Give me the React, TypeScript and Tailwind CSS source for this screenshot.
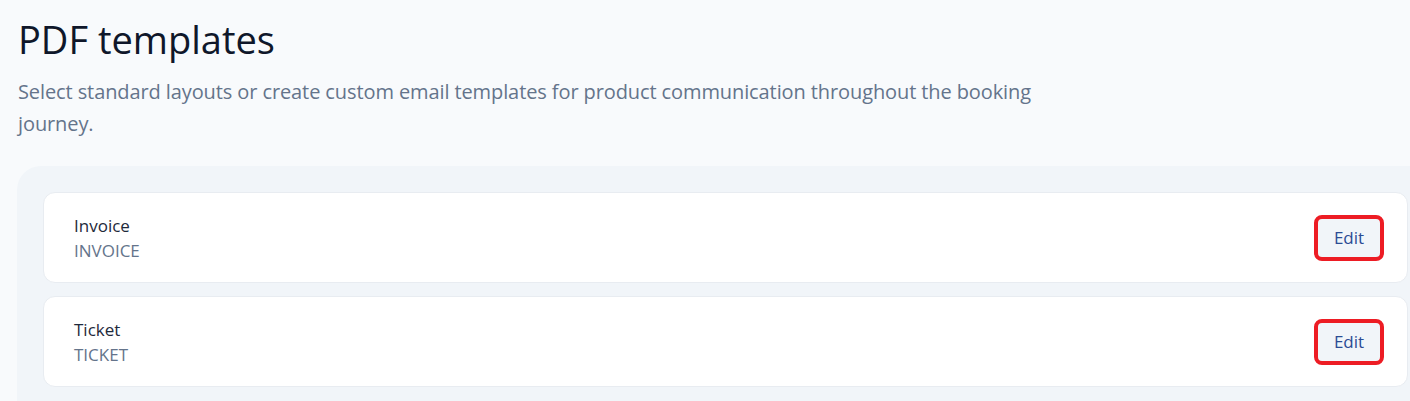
export default function App() {
  const templates = [
    { name: 'Invoice', code: 'INVOICE' },
    { name: 'Ticket', code: 'TICKET' },
  ];

  return (
    <main
      className="min-h-screen overflow-hidden bg-[#f8fafc] pl-[17px] pt-[14px]"
      style={{ fontFamily: '"Open Sans", "Liberation Sans", sans-serif' }}
    >
      {/* Header */}
      <h1 className="pl-px text-[38px] leading-[50px] text-[#0f172a]">PDF templates</h1>
      <p className="mt-[12px] max-w-[1060px] pl-px text-[20px] leading-8 tracking-[-0.1px] text-[#64748b]">
        Select standard layouts or create custom email templates for product communication throughout the booking journey.
      </p>

      {/* Templates */}
      <section className="mt-[26px] flex w-[1417px] flex-col gap-[13px] rounded-tl-3xl bg-[#f1f5f9] p-[26px]">
        {templates.map((t) => (
          <div
            key={t.code}
            className="flex h-[91px] items-center justify-between rounded-xl border border-[#e8ecf1] bg-white pl-[30px] pr-[23px]"
          >
            <div className="flex flex-col">
              <span className="text-[17px] leading-[25px] text-[#1e293b]">{t.name}</span>
              <span className="text-[17px] leading-[25px] text-[#64748b]">{t.code}</span>
            </div>
            <button className="flex h-[46px] w-[70px] items-center justify-center rounded-lg border-4 border-[#ed1c24] bg-[#f1f5f9] text-[17px] text-[#2b4c94]">
              Edit
            </button>
          </div>
        ))}
      </section>
    </main>
  );
}
